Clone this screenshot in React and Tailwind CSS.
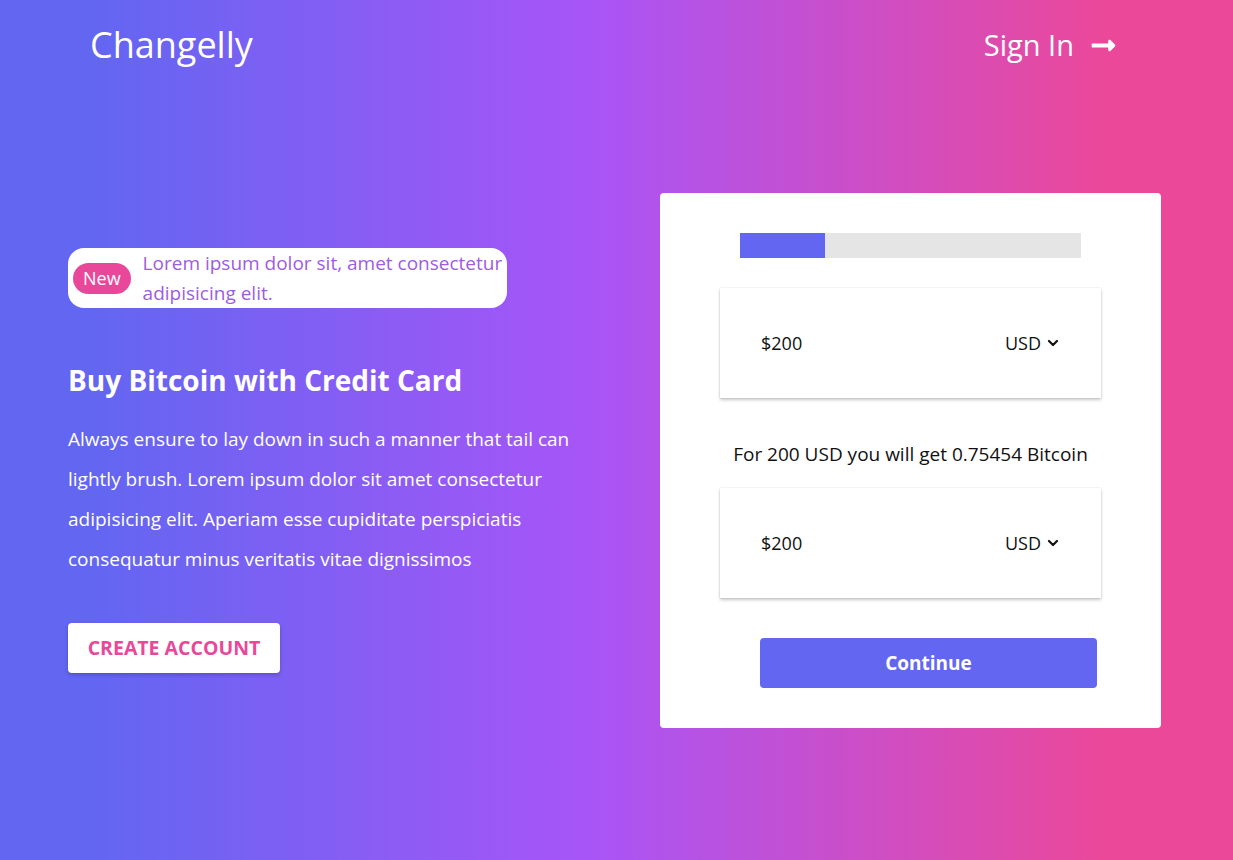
import React from 'react';
import { FaLongArrowAltRight } from 'react-icons/fa';

const font = { fontFamily: '"Open Sans", "Noto Sans", sans-serif' };

const AmountBox = () => (
  <div className="h-[110px] bg-white flex items-center justify-between pl-[41px] pr-[42px] shadow-[0_2px_3px_rgba(0,0,0,0.22),0_0_1px_rgba(0,0,0,0.2)]">
    <span className="text-[18px] text-[#111]">$200</span>
    <span className="flex items-center gap-[6px] text-[18px] text-[#111]">
      USD
      <svg width="12" height="12" viewBox="0 0 12 12" fill="none">
        <path d="M2 4l4 4 4-4" stroke="#111" strokeWidth="2.2" strokeLinecap="round" strokeLinejoin="round" />
      </svg>
    </span>
  </div>
);

export default function App() {
  return (
    <div
      style={font}
      className="min-h-screen w-full bg-[linear-gradient(to_right,#6366f1_8%,#a855f7_48%,#ec4899_90%)] flex flex-col"
    >
      {/* header */}
      <header className="h-[90px] flex items-center justify-between pl-[90px] pr-[116px]">
        <div className="text-white text-[36px] leading-[40px]">Changelly</div>
        <button className="flex items-center gap-[16px] text-white text-[29px] leading-[36px]">
          Sign In
          <FaLongArrowAltRight className="w-[27px] h-[27px]" />
        </button>
      </header>

      {/* main */}
      <main className="flex items-center pt-[103px] pl-[68px]">
        <div className="w-[592px]">
          <div className="w-[439px] h-[60px] bg-white rounded-[16px] flex items-center pl-[5px]">
            <span className="h-[31px] px-[10px] rounded-full bg-[#e9489a] text-white text-[18px] leading-[31px] shrink-0">
              New
            </span>
            <p className="ml-[12px] w-[364px] text-[#9d5ce3] text-[19px] leading-[30px]">
              Lorem ipsum dolor sit, amet consectetur adipisicing elit.
            </p>
          </div>

          <h1 className="mt-[54px] text-white text-[28px] leading-[36px] font-bold">
            Buy Bitcoin with Credit Card
          </h1>
          <p className="mt-[21px] w-[512px] text-white text-[19px] leading-[40px]">
            Always ensure to lay down in such a manner that tail can lightly brush. Lorem ipsum dolor sit amet consectetur adipisicing elit. Aperiam esse cupiditate perspiciatis consequatur minus veritatis vitae dignissimos
          </p>

          <button className="mt-[44px] w-[212px] h-[50px] bg-white rounded-[4px] text-[#e9489a] text-[19.5px] font-bold shadow-[0_2px_4px_rgba(0,0,0,0.2)]">
            CREATE ACCOUNT
          </button>
        </div>

        {/* card */}
        <div className="w-[501px] bg-white rounded-[4px] pt-[40px] pb-[40px] px-[60px]">
          <div className="mx-[20px] h-[25px] bg-[#e5e5e5] flex">
            <div className="w-[85px] h-full bg-[#6366f1]" />
          </div>

          <div className="mt-[30px]">
            <AmountBox />
          </div>

          <p className="mt-[44px] mb-[22px] text-center text-[19px] leading-[24px] text-[#111]">
            For 200 USD you will get 0.75454 Bitcoin
          </p>

          <AmountBox />

          <button className="mt-[40px] ml-[40px] w-[337px] h-[50px] rounded-[4px] bg-[#6366f1] text-white text-[19px] font-bold">
            Continue
          </button>
        </div>
      </main>
    </div>
  );
}
